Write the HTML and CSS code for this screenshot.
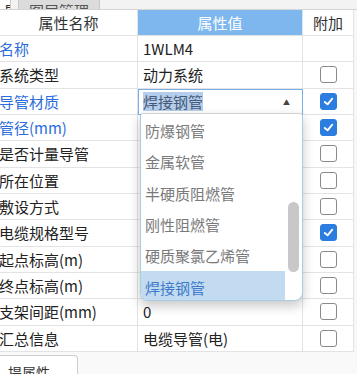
FILE: index.html
```html
<!DOCTYPE html>
<html>
<head>
<meta charset="utf-8">
<link rel="stylesheet" href="styles.css">
</head>
<body>
<div class="page">
  <div class="tabs">
    <div class="tab tab-active"><span>属性</span></div>
    <div class="tab tab-grey"><span>图层管理</span></div>
  </div>
  <div class="grid-wrap">
    <div class="grid">
      <div class="cell head">属性名称</div>
      <div class="cell head head-val">属性值</div>
      <div class="cell head head-add">附加</div>

      <div class="cell name blue">名称</div>
      <div class="cell val">1WLM4</div>
      <div class="cell add"></div>

      <div class="cell name">系统类型</div>
      <div class="cell val">动力系统</div>
      <div class="cell add"><span class="cb"></span></div>

      <div class="cell name blue">导管材质</div>
      <div class="cell val combo"><span class="sel">焊接钢管</span><span class="arrow">▲</span></div>
      <div class="cell add"><span class="cb on"><svg viewBox="0 0 16 16"><polyline points="4,8.5 7,11 12,5" /></svg></span></div>

      <div class="cell name blue">管径(mm)</div>
      <div class="cell val"></div>
      <div class="cell add"><span class="cb on"><svg viewBox="0 0 16 16"><polyline points="4,8.5 7,11 12,5" /></svg></span></div>

      <div class="cell name">是否计量导管</div>
      <div class="cell val"></div>
      <div class="cell add"><span class="cb"></span></div>

      <div class="cell name">所在位置</div>
      <div class="cell val"></div>
      <div class="cell add"><span class="cb"></span></div>

      <div class="cell name">敷设方式</div>
      <div class="cell val"></div>
      <div class="cell add"><span class="cb"></span></div>

      <div class="cell name">电缆规格型号</div>
      <div class="cell val"></div>
      <div class="cell add"><span class="cb on"><svg viewBox="0 0 16 16"><polyline points="4,8.5 7,11 12,5" /></svg></span></div>

      <div class="cell name">起点标高(m)</div>
      <div class="cell val"></div>
      <div class="cell add"><span class="cb"></span></div>

      <div class="cell name">终点标高(m)</div>
      <div class="cell val"></div>
      <div class="cell add"><span class="cb"></span></div>

      <div class="cell name">支架间距(mm)</div>
      <div class="cell val">0</div>
      <div class="cell add"><span class="cb"></span></div>

      <div class="cell name">汇总信息</div>
      <div class="cell val">电缆导管(电)</div>
      <div class="cell add"><span class="cb"></span></div>
    </div>

    <div class="popup">
      <div class="list">
        <div class="item">防爆钢管</div>
        <div class="item">金属软管</div>
        <div class="item">半硬质阻燃管</div>
        <div class="item">刚性阻燃管</div>
        <div class="item">硬质聚氯乙烯管</div>
        <div class="item item-sel">焊接钢管</div>
      </div>
      <div class="thumb"></div>
    </div>
  </div>
  <div class="bottom">
    <div class="btab"><span>提属性</span></div>
  </div>
</div>
</body>
</html>
```

FILE: styles.css
```css
html, body {
  margin: 0;
  padding: 0;
  background: #f7f7f7;
}
body {
  font-family: "Noto Sans CJK SC", "Noto Sans", sans-serif;
  font-size: 15px;
  color: #222;
  width: 357px;
  height: 374px;
  overflow: hidden;
}
.page {
  display: flex;
  flex-direction: column;
}
.tabs {
  height: 10px;
  box-sizing: border-box;
  border-bottom: 1px solid #d4d4d4;
  display: flex;
  background: #f3f3f3;
  overflow: hidden;
}
.tab {
  height: 10px;
  display: flex;
  align-items: flex-end;
  overflow: hidden;
  font-size: 15px;
  line-height: 18px;
}
.tab span {
  display: block;
  height: 18px;
  transform: translateY(10px);
}
.tab-active {
  width: 10px;
  background: #fff;
  border-right: 1px solid #c8c8c8;
  justify-content: flex-end;
  color: #333;
}
.tab-active span {
  margin-right: -24px;
}
.tab-grey {
  margin-left: 7px;
  width: 82px;
  background: #dcdcdc;
  border-left: 1px solid #c9c9c9;
  border-right: 1px solid #c9c9c9;
  box-sizing: border-box;
  justify-content: center;
  color: #555;
}
.grid-wrap {
  position: relative;
  width: 354px;
}
.grid {
  display: grid;
  grid-template-columns: 138px 165px 51px;
  grid-template-rows: 26px repeat(12, 26.33px);
  background: #fff;
}
.cell {
  box-sizing: border-box;
  border-right: 1px solid #e3e3e3;
  border-bottom: 1px solid #e3e3e3;
  display: flex;
  align-items: center;
  white-space: nowrap;
  overflow: hidden;
}
.head {
  justify-content: center;
  color: #333;
}
.head-val {
  background: #7db7ee;
  color: #fff;
  border-right-color: #d8e6f4;
}
.name {
  padding-left: 0;
  text-indent: -1px;
}
.blue {
  color: #2a6ddb;
}
.val {
  padding-left: 5px;
}
.add {
  justify-content: center;
}
.combo {
  border: 1px solid #78afe6;
  padding-left: 4px;
  justify-content: space-between;
  padding-right: 12px;
}
.sel {
  background: #b3cdea;
  color: #455a78;
  line-height: 19px;
}
.arrow {
  font-size: 7px;
  color: #444;
}
.cb {
  width: 17px;
  height: 17px;
  box-sizing: border-box;
  border: 1.5px solid #8a8a8a;
  border-radius: 3px;
  background: #fff;
  display: flex;
}
.cb.on {
  background: #2b7de0;
  border-color: #2b7de0;
}
.cb svg {
  width: 100%;
  height: 100%;
  fill: none;
  stroke: #fff;
  stroke-width: 2;
  stroke-linecap: round;
  stroke-linejoin: round;
}
.popup {
  position: absolute;
  left: 140px;
  top: 103px;
  width: 163px;
  height: 188px;
  box-sizing: border-box;
  background: #fff;
  border: 1px solid #a7cde3;
  border-top-color: #d0d0d0;
  border-radius: 3px 3px 8px 8px;
  box-shadow: 0 5px 12px rgba(0, 0, 0, 0.22);
  overflow: hidden;
}
.list {
  width: 144px;
  display: flex;
  flex-direction: column;
  padding-top: 1px;
}
.item {
  height: 31.3px;
  display: flex;
  align-items: center;
  padding-left: 4px;
  color: #7a7a7a;
}
.item-sel {
  background: #c3dbf1;
  color: #3d7bc8;
}
.thumb {
  position: absolute;
  left: 147px;
  top: 88px;
  width: 11px;
  height: 70px;
  border-radius: 6px;
  background: #c8c8c8;
}
.bottom {
  height: 22px;
  display: flex;
  align-items: flex-end;
  overflow: hidden;
  background: #f9f9f9;
}
.btab {
  width: 78px;
  height: 19px;
  box-sizing: border-box;
  background: #fff;
  border: 1px solid #cfcfcf;
  border-left: none;
  border-bottom: none;
  border-top-right-radius: 4px;
  overflow: hidden;
  padding-left: 8px;
  font-size: 14px;
  color: #333;
  line-height: 20px;
}
.btab span {
  display: block;
  padding-top: 6px;
}
```
